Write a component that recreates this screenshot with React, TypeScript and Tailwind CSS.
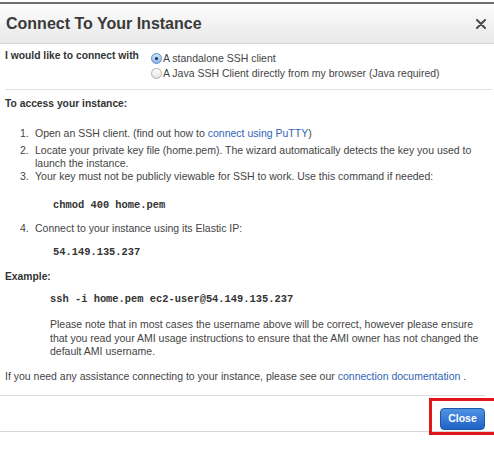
import React from 'react';

const Radio = ({ checked }: { checked?: boolean }) =>
  checked ? (
    <span className="flex h-[11px] w-[11px] items-center justify-center rounded-full border border-[#5b8bc9] bg-gradient-to-b from-[#cfe3fa] to-[#8fb8ec]">
      <span className="h-[3px] w-[3px] rounded-full bg-[#1d2c45]" />
    </span>
  ) : (
    <span className="h-[11px] w-[11px] rounded-full border border-[#b0b0b0] bg-gradient-to-b from-[#ffffff] to-[#e4e4e4]" />
  );

const Mono = ({ children, className = '' }: { children: React.ReactNode; className?: string }) => (
  <div className={`font-['Liberation_Mono',monospace] text-[10.4px] font-bold leading-[13px] text-[#333] ${className}`}>{children}</div>
);

const Item = ({ n, children, className = '' }: { n: string; children: React.ReactNode; className?: string }) => (
  <div className={`flex leading-[13px] ${className}`}>
    <span className="w-[30px] shrink-0 pl-[15px]">{n}</span>
    <div className="whitespace-nowrap">{children}</div>
  </div>
);

export default function App() {
  return (
    <div className="relative h-[449px] w-[494px] overflow-hidden bg-white pt-[2px] font-['Liberation_Sans',Arial,sans-serif] text-[10.5px] text-[#444]">
      <div className="flex h-[42px] items-center justify-between border-t-2 border-b border-t-[#6e6e6e] border-b-[#d4d4d4] bg-gradient-to-b from-[#fdfdfd] to-[#e8e8e8] pl-[6px] pr-[8px]">
        <h1 className="text-[16px] font-bold text-[#3a3a3a]">Connect To Your Instance</h1>
        <svg width="10" height="10" viewBox="0 0 10 10">
          <path d="M1 1L9 9M9 1L1 9" stroke="#4a4a4a" strokeWidth="2" strokeLinecap="round" />
        </svg>
      </div>

      <div className="px-[5px]">
        <div className="mt-[5px] flex">
          <div className="w-[146px] text-[10.3px] font-bold leading-[13px] text-[#333]">I would like to connect with</div>
          <div className="pt-[2px]">
            <div className="flex h-[15px] items-center gap-[1px]">
              <Radio checked />
              <span>A standalone SSH client</span>
            </div>
            <div className="flex h-[15px] items-center gap-[1px]">
              <Radio />
              <span>A Java SSH Client directly from my browser (Java required)</span>
            </div>
          </div>
        </div>

        <div className="mr-[-3px] mt-[8px] h-px bg-[#e2e2e2]" />

        <div className="mt-[7px] text-[10.3px] font-bold leading-[13px] text-[#333]">To access your instance:</div>

        <Item n="1." className="mt-[17px]">
          Open an SSH client. (find out how to <span className="text-[#2f64b6]">connect using PuTTY</span>)
        </Item>
        <Item n="2." className="mt-[4px]">
          Locate your private key file (home.pem). The wizard automatically detects the key you used to
          <br />
          launch the instance.
        </Item>
        <Item n="3.">Your key must not be publicly viewable for SSH to work. Use this command if needed:</Item>
        <Mono className="mt-[16px] pl-[48px]">chmod 400 home.pem</Mono>
        <Item n="4." className="mt-[10px]">Connect to your instance using its Elastic IP:</Item>
        <Mono className="mt-[11px] pl-[48px]">54.149.135.237</Mono>

        <div className="mt-[11px] text-[10.3px] font-bold leading-[13px] text-[#333]">Example:</div>
        <Mono className="mt-[10px] pl-[45px]">ssh -i home.pem ec2-user@54.149.135.237</Mono>
        <div className="mt-[12px] whitespace-nowrap pl-[45px] leading-[13.5px]">
          Please note that in most cases the username above will be correct, however please ensure
          <br />
          that you read your AMI usage instructions to ensure that the AMI owner has not changed the
          <br />
          default AMI username.
        </div>

        <div className="mt-[11px] whitespace-nowrap leading-[13px]">
          If you need any assistance connecting to your instance, please see our{' '}
          <span className="text-[#2f64b6]">connection documentation</span> .
        </div>
      </div>

      <div className="mr-[9px] mt-[12px] h-px bg-[#dcdcdc]" />
      <div className="flex justify-end pr-[9px] pt-[12px]">
        <button className="h-[22px] w-[45px] rounded-[4px] border border-[#1d58ad] bg-gradient-to-b from-[#4f93e3] to-[#1f62c6] text-[10.5px] font-bold text-white">
          Close
        </button>
      </div>
      <div className="mt-[1px] h-px bg-[#d8d8d8]" />

      <div className="absolute left-[429px] top-[398px] h-[37px] w-[80px] border-[3px] border-[#e0161b]" />
    </div>
  );
}
